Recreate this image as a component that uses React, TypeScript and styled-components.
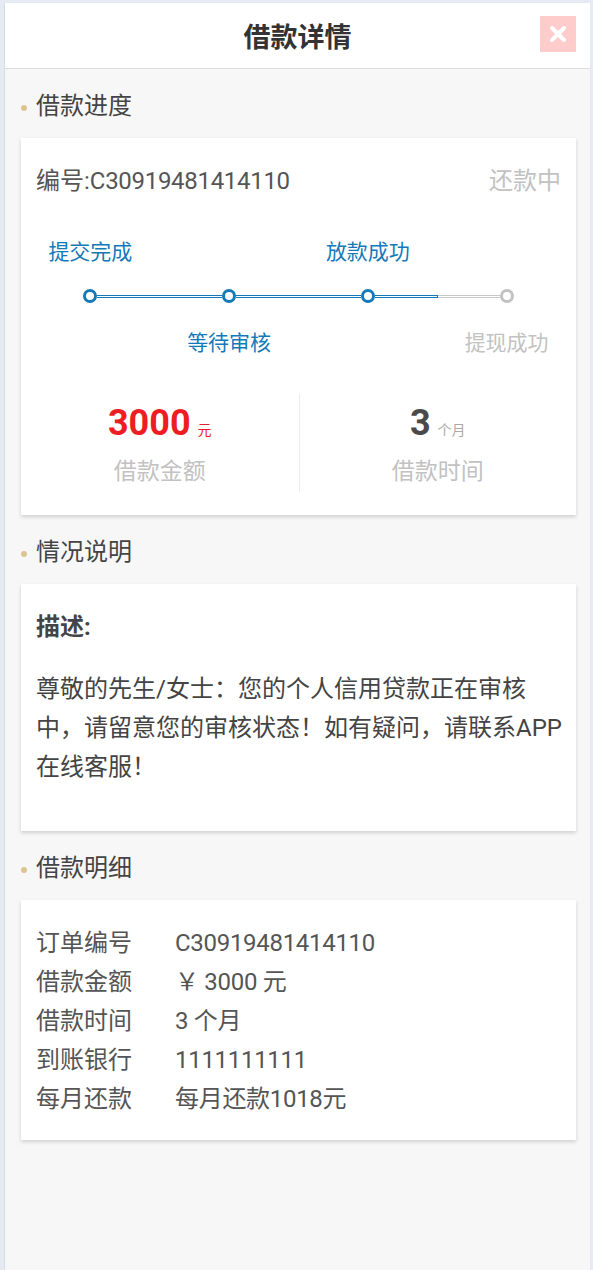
import React from 'react';
import styled, { createGlobalStyle } from 'styled-components';

const BLUE = '#1479b8';
const MUTED = '#c2c2c2';

const STEPS = [
  { name: '提交完成', done: true, above: true },
  { name: '等待审核', done: true, above: false },
  { name: '放款成功', done: true, above: true },
  { name: '提现成功', done: false, above: false },
];

const DETAILS = [
  { label: '订单编号', value: 'C30919481414110' },
  { label: '借款金额', value: '￥ 3000 元' },
  { label: '借款时间', value: '3 个月' },
  { label: '到账银行', value: '1111111111' },
  { label: '每月还款', value: '每月还款1018元' },
];

const GlobalStyle = createGlobalStyle`
  html, body {
    margin: 0;
    padding: 0;
    background: #e6ebf3;
  }
  body {
    font-family: Roboto, "Noto Sans CJK SC", sans-serif;
    color: #555;
  }
  * {
    box-sizing: border-box;
  }
`;

export default function App() {
  return (
    <>
      <GlobalStyle />
      <Frame>
        <Page>
          <Header>
            <HeaderTitle>借款详情</HeaderTitle>
            <CloseButton aria-label="关闭">
              <svg width="18" height="18" viewBox="0 0 18 18">
                <path d="M3 3 L15 15 M15 3 L3 15" stroke="#fff" strokeWidth="4" strokeLinecap="round" />
              </svg>
            </CloseButton>
          </Header>

          <SectionTitle>借款进度</SectionTitle>
          <Card>
            <OrderRow>
              <OrderNo>
                编号:<Mono>C30919481414110</Mono>
              </OrderNo>
              <Status>还款中</Status>
            </OrderRow>

            <LabelRow>
              {STEPS.map((s) => (
                <StepLabel key={s.name} done={s.done}>
                  {s.above ? s.name : ''}
                </StepLabel>
              ))}
            </LabelRow>
            <Track>
              <Dot done />
              <Segment />
              <Dot done />
              <Segment />
              <Dot done />
              <Segment>
                <Half />
                <Half muted />
              </Segment>
              <Dot />
            </Track>
            <LabelRow below>
              {STEPS.map((s) => (
                <StepLabel key={s.name} done={s.done}>
                  {s.above ? '' : s.name}
                </StepLabel>
              ))}
            </LabelRow>

            <Stats>
              <Stat>
                <StatValue>
                  <Big red>3000</Big>
                  <Unit red>元</Unit>
                </StatValue>
                <StatLabel>借款金额</StatLabel>
              </Stat>
              <Stat divided>
                <StatValue>
                  <Big>3</Big>
                  <Unit>个月</Unit>
                </StatValue>
                <StatLabel>借款时间</StatLabel>
              </Stat>
            </Stats>
          </Card>

          <SectionTitle>情况说明</SectionTitle>
          <NoteCard>
            <NoteHead>描述:</NoteHead>
            <NoteText>
              尊敬的先生/女士：您的个人信用贷款正在审核中，请留意您的审核状态！如有疑问，请联系APP在线客服！
            </NoteText>
          </NoteCard>

          <SectionTitle>借款明细</SectionTitle>
          <DetailCard>
            {DETAILS.map((d) => (
              <DetailRow key={d.label}>
                <DetailLabel>{d.label}</DetailLabel>
                <DetailValue>{d.value}</DetailValue>
              </DetailRow>
            ))}
          </DetailCard>
        </Page>
      </Frame>
    </>
  );
}

const Frame = styled.div`
  padding: 3px 3px 0 4px;
`;

const Page = styled.div`
  min-height: calc(100vh - 3px);
  background: #f7f7f7;
  border-left: 1px solid #d6dce4;
  padding-bottom: 40px;
`;

const Header = styled.div`
  height: 66px;
  background: #fff;
  border-bottom: 1px solid #dcdcdc;
  display: flex;
  align-items: center;
  justify-content: center;
  position: relative;
`;

const HeaderTitle = styled.h1`
  margin: 0;
  font-size: 27px;
  font-weight: 700;
  color: #333;
`;

const CloseButton = styled.button`
  position: absolute;
  right: 14px;
  top: 13px;
  width: 36px;
  height: 36px;
  border: 0;
  padding: 0;
  background: #ffcccc;
  display: flex;
  align-items: center;
  justify-content: center;
`;

const SectionTitle = styled.h2`
  margin: 0;
  padding: 22px 16px 17px;
  display: flex;
  align-items: center;
  font-size: 24px;
  line-height: 30px;
  font-weight: 400;
  color: #444;

  &::before {
    content: '';
    width: 6px;
    height: 6px;
    border-radius: 50%;
    background: #dcc58e;
    margin: 4px 9px 0 0;
  }
`;

const Card = styled.div`
  margin: 0 14px 0 16px;
  background: #fff;
  box-shadow: 0 2px 4px rgba(0, 0, 0, 0.16);
  padding: 0 0 23px;
`;

const OrderRow = styled.div`
  display: flex;
  justify-content: space-between;
  align-items: center;
  padding: 28px 15px 0;
  line-height: 30px;
`;

const OrderNo = styled.div`
  font-size: 24px;
  color: #555;
`;

const Mono = styled.span`
  letter-spacing: -0.3px;
`;

const Status = styled.div`
  font-size: 24px;
  color: ${MUTED};
`;

const LabelRow = styled.div<{ below?: boolean }>`
  display: grid;
  grid-template-columns: repeat(4, 1fr);
  margin-top: ${(p) => (p.below ? 25 : 41)}px;
  height: 30px;
`;

const StepLabel = styled.div<{ done: boolean }>`
  text-align: center;
  font-size: 21px;
  line-height: 30px;
  color: ${(p) => (p.done ? BLUE : MUTED)};
`;

const Track = styled.div`
  display: flex;
  align-items: center;
  margin-top: 22px;
  padding: 0 62px;
  height: 14px;
`;

const Dot = styled.span<{ done?: boolean }>`
  flex: none;
  width: 14px;
  height: 14px;
  border-radius: 50%;
  border: 3px solid ${(p) => (p.done ? BLUE : MUTED)};
  background: #fff;
`;

const Segment = styled.div`
  flex: 1;
  display: flex;
  height: 3px;
  border-top: 1px solid ${BLUE};
  border-bottom: 1px solid ${BLUE};

  &:has(> *) {
    border: 0;
    height: 3px;
  }
`;

const Half = styled.span<{ muted?: boolean }>`
  flex: 1;
  height: 3px;
  border-top: 1px solid ${(p) => (p.muted ? '#c8c8c8' : BLUE)};
  border-bottom: 1px solid ${(p) => (p.muted ? '#c8c8c8' : BLUE)};
  border-right: ${(p) => (p.muted ? '0' : `1px solid ${BLUE}`)};
`;

const Stats = styled.div`
  display: grid;
  grid-template-columns: 1fr 1fr;
  margin-top: 36px;
  height: 98px;
`;

const Stat = styled.div<{ divided?: boolean }>`
  display: flex;
  flex-direction: column;
  align-items: center;
  padding-top: 7px;
  border-left: ${(p) => (p.divided ? '1px solid #ececec' : '0')};
`;

const StatValue = styled.div`
  display: flex;
  align-items: baseline;
  height: 44px;
  line-height: 44px;
`;

const Big = styled.span<{ red?: boolean }>`
  font-size: 36px;
  font-weight: 700;
  color: ${(p) => (p.red ? '#ee1d23' : '#4a4a4a')};
`;

const Unit = styled.span<{ red?: boolean }>`
  margin-left: 7px;
  font-size: 14px;
  color: ${(p) => (p.red ? '#ee1d23' : '#aaa')};
`;

const StatLabel = styled.div`
  margin-top: 10px;
  font-size: 23px;
  line-height: 34px;
  color: ${MUTED};
`;

const NoteCard = styled(Card)`
  padding: 28px 11px 44px 15px;
`;

const NoteHead = styled.div`
  font-size: 24px;
  line-height: 30px;
  font-weight: 700;
  color: #444;
`;

const NoteText = styled.p`
  margin: 28px 0 0;
  font-size: 24px;
  line-height: 39px;
  color: #444;
`;

const DetailCard = styled(Card)`
  padding: 24px 15px 21px;
`;

const DetailRow = styled.div`
  display: flex;
  font-size: 24px;
  line-height: 39px;
  color: #555;
`;

const DetailLabel = styled.span`
  width: 139px;
  flex: none;
`;

const DetailValue = styled.span`
  letter-spacing: -0.3px;
`;
